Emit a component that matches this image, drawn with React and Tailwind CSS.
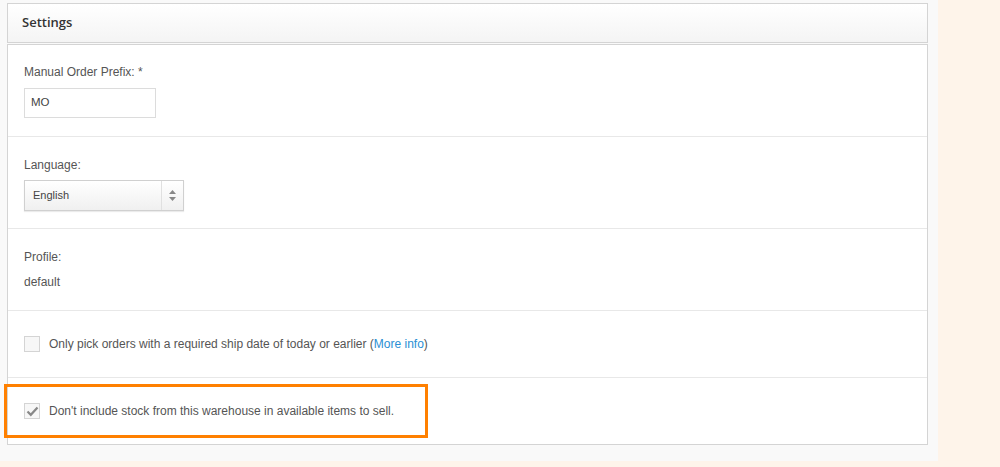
import React from "react";

function Checkbox({ checked }) {
  return (
    <span className="flex h-[16px] w-[16px] items-center justify-center border border-[#d4d4d4] bg-[#f7f7f7]">
      {checked && (
        <svg width="13" height="11" viewBox="0 0 13 11">
          <path d="M1.5 5.5 L4.8 8.8 L11.5 1.5" fill="none" stroke="#888" strokeWidth="2.2" />
        </svg>
      )}
    </span>
  );
}

function App() {
  return (
    <div className="flex h-[467px] w-[1000px] bg-[#fef4ea] font-['Liberation_Sans',Arial,sans-serif] text-[12px] text-[#555]">
      <div className="h-[461px] w-[938px] bg-[#f9f9f9] pl-[7px] pt-[3px]">
        <div className="flex h-[40px] w-[921px] items-center border border-[#d4d4d4] bg-gradient-to-b from-white to-[#f4f4f4] pl-[14px]">
          <span className="font-['Open_Sans',sans-serif] text-[13px] font-semibold text-[#333]">Settings</span>
        </div>
        <div className="mt-[1px] flex h-[401px] w-[921px] flex-col border border-[#d4d4d4] bg-white">
          <div className="flex h-[92px] flex-col border-b border-[#e8e8e8] pl-[16px] pt-[20px]">
            <span className="leading-[15px]">Manual Order Prefix: *</span>
            <div className="mt-[8px] flex h-[30px] w-[132px] items-center border border-[#dcdcdc] pl-[6px] text-[11.5px] text-[#444]">MO</div>
          </div>
          <div className="flex h-[92px] flex-col border-b border-[#e8e8e8] pl-[16px] pt-[21px]">
            <span className="leading-[15px]">Language:</span>
            <div className="mt-[7px] flex h-[31px] w-[160px] border border-[#d0d0d0] bg-gradient-to-b from-white to-[#f0f0f0] shadow-[0_1px_1px_rgba(0,0,0,0.08)]">
              <span className="flex flex-1 items-center pl-[8px] text-[11px] text-[#444]">English</span>
              <span className="flex w-[22px] flex-col items-center justify-center gap-[3px] border-l border-[#e0e0e0]">
                <svg width="7" height="4" viewBox="0 0 7 4"><path d="M0 4 L3.5 0 L7 4 Z" fill="#888" /></svg>
                <svg width="7" height="4" viewBox="0 0 7 4"><path d="M0 0 L3.5 4 L7 0 Z" fill="#888" /></svg>
              </span>
            </div>
          </div>
          <div className="flex h-[82px] flex-col border-b border-[#e8e8e8] pl-[16px] pt-[21px]">
            <span className="leading-[15px]">Profile:</span>
            <span className="mt-[10px] leading-[15px]">default</span>
          </div>
          <div className="flex h-[67px] items-center gap-[9px] border-b border-[#e8e8e8] pl-[16px]">
            <Checkbox />
            <span>
              Only pick orders with a required ship date of today or earlier (
              <span className="text-[#2a8fd4]">More info</span>)
            </span>
          </div>
          <div className="relative flex flex-1 items-center gap-[9px] pl-[16px]">
            <Checkbox checked />
            <span>Don't include stock from this warehouse in available items to sell.</span>
            <div className="absolute left-[-4px] top-[6px] h-[54px] w-[424px] border-[3px] border-[#ff8000]" />
          </div>
        </div>
      </div>
    </div>
  );
}

export default App;
